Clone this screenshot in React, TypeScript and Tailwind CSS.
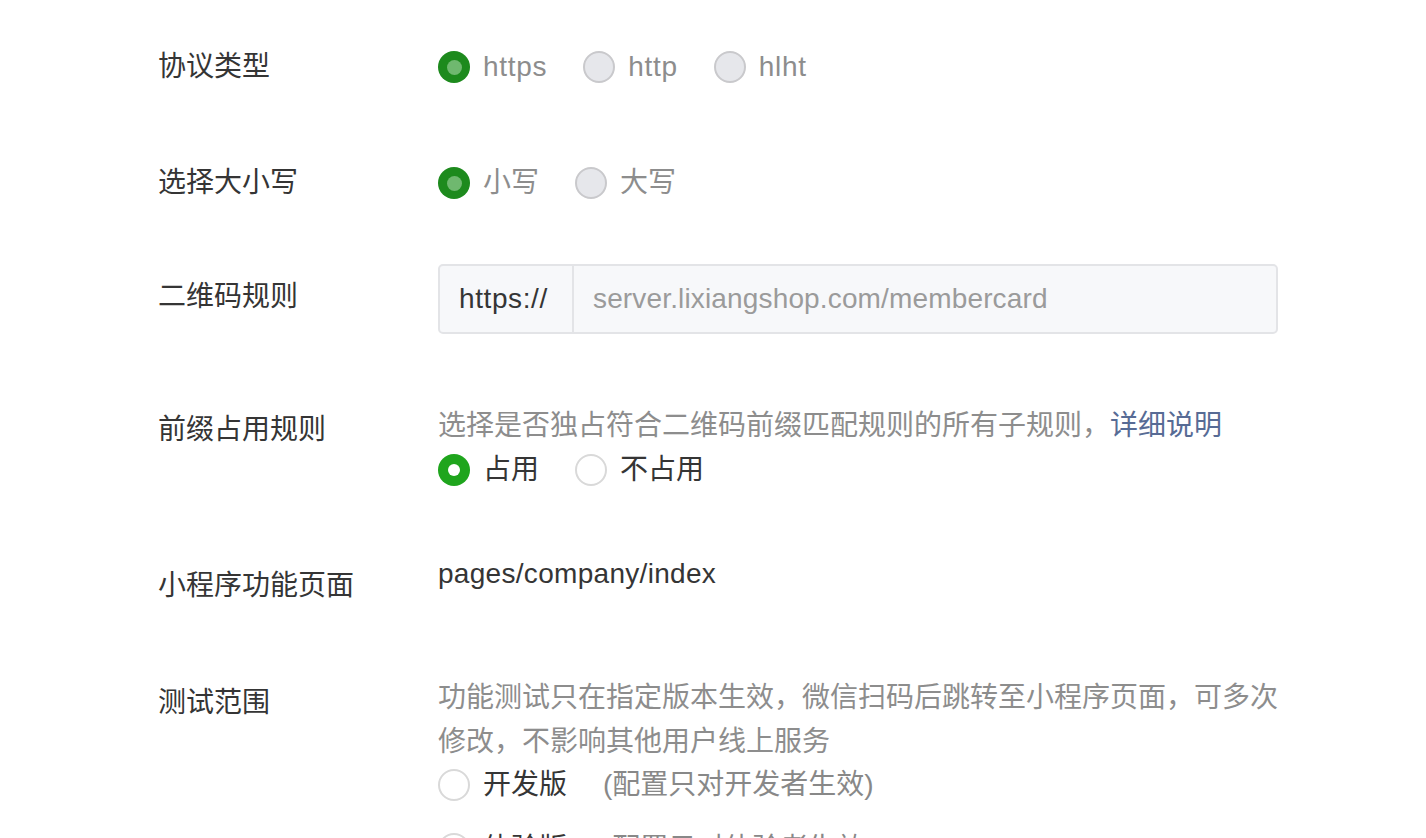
import React from 'react';

type RadioKind = 'disabledOn' | 'disabledOff' | 'on' | 'off';

const Radio: React.FC<{ kind: RadioKind }> = ({ kind }) => {
  if (kind === 'disabledOn') {
    return (
      <span className="w-[32px] h-[32px] rounded-full bg-[#1d8a1d] flex items-center justify-center shrink-0">
        <span className="w-[15px] h-[15px] rounded-full bg-[#6fb86f]" />
      </span>
    );
  }
  if (kind === 'disabledOff') {
    return <span className="w-[32px] h-[32px] rounded-full bg-[#e6e7eb] border-2 border-[#c9c9cc] shrink-0" />;
  }
  if (kind === 'on') {
    return (
      <span className="w-[32px] h-[32px] rounded-full bg-[#1fa51d] flex items-center justify-center shrink-0">
        <span className="w-[12px] h-[12px] rounded-full bg-white" />
      </span>
    );
  }
  return <span className="w-[32px] h-[32px] rounded-full bg-white border-2 border-[#d9d9d9] shrink-0" />;
};

const Option: React.FC<{ kind: RadioKind; label: string; first?: boolean; note?: string; latin?: boolean }> = ({
  kind,
  label,
  first,
  note,
  latin,
}) => {
  const disabled = kind === 'disabledOn' || kind === 'disabledOff';
  return (
    <label className={`flex items-center h-[44px] ${first ? '' : 'ml-[36px]'}`}>
      <Radio kind={kind} />
      <span
        className={`ml-[13px] ${disabled ? 'text-[#8d8d8d]' : 'text-[#353535]'} ${latin ? 'tracking-[0.7px]' : ''}`}
      >
        {label}
      </span>
      {note && <span className="ml-[36px] text-[#888888]">{note}</span>}
    </label>
  );
};

const Label: React.FC<{ text: string; pt?: string }> = ({ text, pt = '' }) => (
  <div className={`w-[280px] shrink-0 text-[#353535] leading-[44px] ${pt}`}>{text}</div>
);

export default function App() {
  return (
    <div
      className="min-h-screen bg-white pl-[158px] pt-[45px] text-[28px] leading-[44px]"
      style={{ fontFamily: '"Liberation Sans", "Noto Sans CJK SC", sans-serif' }}
    >
      {/* 协议类型 */}
      <div className="flex">
        <Label text="协议类型" />
        <div className="flex items-center">
          <Option kind="disabledOn" label="https" first latin />
          <Option kind="disabledOff" label="http" latin />
          <Option kind="disabledOff" label="hlht" latin />
        </div>
      </div>

      {/* 选择大小写 */}
      <div className="flex mt-[72px]">
        <Label text="选择大小写" />
        <div className="flex items-center">
          <Option kind="disabledOn" label="小写" first />
          <Option kind="disabledOff" label="大写" />
        </div>
      </div>

      {/* 二维码规则 */}
      <div className="flex mt-[59px]">
        <Label text="二维码规则" pt="pt-[11px]" />
        <div className="w-[840px] h-[70px] flex border-2 border-[#e3e4e7] rounded-[5px] bg-[#f7f8fa]">
          <div className="w-[134px] flex items-center pl-[19px] border-r-2 border-[#e3e4e7] text-[#353535] tracking-[0.6px]">
            https://
          </div>
          <div className="flex items-center pl-[19px] text-[#9b9b9b] tracking-[0.15px]">
            server.lixiangshop.com/membercard
          </div>
        </div>
      </div>

      {/* 前缀占用规则 */}
      <div className="flex mt-[70px]">
        <Label text="前缀占用规则" pt="pt-[4px]" />
        <div className="w-[850px]">
          <div className="text-[#8d8d8d]">
            选择是否独占符合二维码前缀匹配规则的所有子规则，
            <span className="text-[#576b95]">详细说明</span>
          </div>
          <div className="flex items-center">
            <Option kind="on" label="占用" first />
            <Option kind="off" label="不占用" />
          </div>
        </div>
      </div>

      {/* 小程序功能页面 */}
      <div className="flex mt-[60px]">
        <Label text="小程序功能页面" pt="pt-[12px]" />
        <div className="text-[#353535] tracking-[0.3px]">pages/company/index</div>
      </div>

      {/* 测试范围 */}
      <div className="flex mt-[68px]">
        <Label text="测试范围" pt="pt-[5px]" />
        <div className="w-[850px]">
          <div className="text-[#8d8d8d]">
            功能测试只在指定版本生效，微信扫码后跳转至小程序页面，可多次
            <br />
            修改，不影响其他用户线上服务
          </div>
          <div className="-mt-[1px]">
            <Option kind="off" label="开发版" first note="(配置只对开发者生效)" />
          </div>
          <div className="mt-[20px]">
            <Option kind="off" label="体验版" first note="(配置只对体验者生效)" />
          </div>
        </div>
      </div>
    </div>
  );
}
